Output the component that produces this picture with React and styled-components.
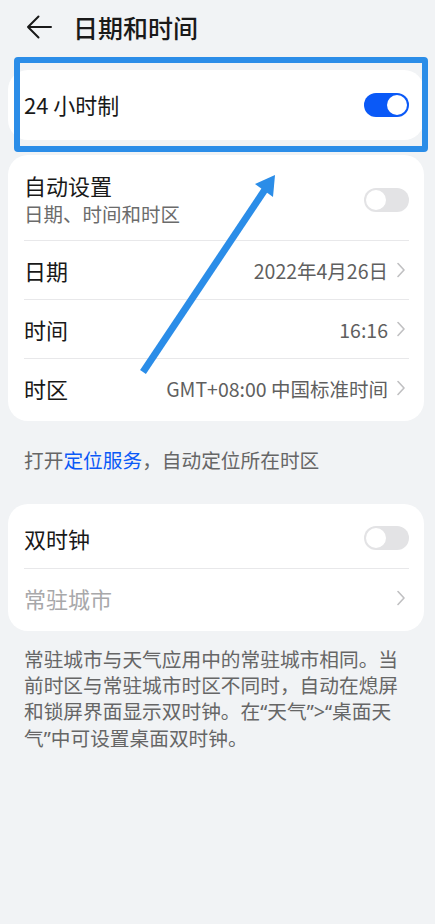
import React from 'react';
import styled, { createGlobalStyle } from 'styled-components';

const GlobalStyle = createGlobalStyle`
  html, body {
    margin: 0;
    padding: 0;
    background: #f1f3f5;
  }
  body {
    font-family: "Noto Sans CJK SC", "Noto Sans", sans-serif;
    color: #191919;
  }
`;

const Page = styled.div`
  position: relative;
  width: 435px;
  min-height: 924px;
  background: #f1f3f5;
  padding: 0 11px 0 8px;
  box-sizing: border-box;
`;

const Header = styled.header`
  display: flex;
  align-items: center;
  height: 54px;
  gap: 20px;
  padding-left: 17px;
`;

const BackButton = styled.button`
  display: flex;
  align-items: center;
  justify-content: center;
  width: 28px;
  height: 28px;
  padding: 0;
  background: none;
  border: none;
`;

const Title = styled.h1`
  margin: 0;
  font-size: 25px;
  font-weight: 500;
  color: #191919;
`;

const HighlightWrap = styled.div`
  position: relative;
  margin-top: 16px;
`;

const Highlight = styled.div`
  position: absolute;
  top: -13px;
  left: 6px;
  right: -4px;
  bottom: -12px;
  border: 6px solid #2b8de8;
  border-radius: 4px;
  pointer-events: none;
`;

const Card = styled.section`
  background: #fff;
  border-radius: 20px;
  padding: ${({ $pad }) => $pad || '4px 0'};
  margin-top: ${({ $top }) => $top || 0}px;
`;

const Row = styled.div`
  display: flex;
  align-items: center;
  justify-content: space-between;
  min-height: ${({ $h }) => $h || 59}px;
  margin: 0 15px 0 16px;
  box-sizing: border-box;
  border-top: ${({ $divider }) => ($divider ? '1px solid #e8e8ea' : 'none')};
`;

const TextCol = styled.div`
  display: flex;
  flex-direction: column;
`;

const Label = styled.span`
  font-size: 22px;
  line-height: 29px;
  color: ${({ $muted }) => ($muted ? '#a8a8aa' : '#191919')};
`;

const Sub = styled.span`
  font-size: 19.5px;
  line-height: 28px;
  color: #6b6b6b;
`;

const Value = styled.span`
  display: flex;
  align-items: center;
  gap: 9px;
  font-size: 19.5px;
  color: #5f5f5f;
`;

const Switch = styled.span`
  position: relative;
  display: inline-block;
  width: 45px;
  height: 24px;
  border-radius: 12px;
  background: ${({ $on }) => ($on ? '#0a59f7' : '#e3e3e5')};
  flex-shrink: 0;
  &::after {
    content: '';
    position: absolute;
    top: 2px;
    left: ${({ $on }) => ($on ? '23px' : '2px')};
    width: 20px;
    height: 20px;
    border-radius: 50%;
    background: #fff;
  }
`;

const Note = styled.p`
  margin: ${({ $m }) => $m};
  padding: 0 20px 0 16px;
  font-size: 19.7px;
  line-height: 26px;
  color: #666;
`;

const Quote = styled.span`
  font-family: "Noto Sans", sans-serif;
`;

const Link = styled.span`
  color: #0a59f7;
`;

const ChevronSvg = styled.svg`
  display: block;
  margin-right: 4px;
`;

const Annotation = styled.svg`
  position: absolute;
  left: 0;
  top: 0;
  pointer-events: none;
`;

const Chevron = () => (
  <ChevronSvg width="8" height="16" viewBox="0 0 8 16">
    <path d="M1 1.5 L7 8 L1 14.5" fill="none" stroke="#c0c0c2" strokeWidth="1.6" strokeLinecap="round" strokeLinejoin="round" />
  </ChevronSvg>
);

const BackArrow = () => (
  <svg width="28" height="24" viewBox="0 0 28 24">
    <path d="M3 12 H26 M13.5 1.5 L3 12 L13.5 22.5" fill="none" stroke="#191919" strokeWidth="2" strokeLinecap="round" strokeLinejoin="round" />
  </svg>
);

export default function App() {
  return (
    <>
      <GlobalStyle />
      <Page>
        <Header>
          <BackButton aria-label="返回">
            <BackArrow />
          </BackButton>
          <Title>日期和时间</Title>
        </Header>

        <HighlightWrap>
          <Card $pad="5px 0 6px">
            <Row>
              <Label>24 小时制</Label>
              <Switch $on />
            </Row>
          </Card>
          <Highlight />
        </HighlightWrap>

        <Card $top={15}>
          <Row $h={81}>
            <TextCol>
              <Label>自动设置</Label>
              <Sub>日期、时间和时区</Sub>
            </TextCol>
            <Switch />
          </Row>
          <Row $divider>
            <Label>日期</Label>
            <Value>2022年4月26日<Chevron /></Value>
          </Row>
          <Row $divider>
            <Label>时间</Label>
            <Value>16:16<Chevron /></Value>
          </Row>
          <Row $divider>
            <Label>时区</Label>
            <Value>GMT+08:00 中国标准时间<Chevron /></Value>
          </Row>
        </Card>

        <Note $m="26px 0 31px">
          打开<Link>定位服务</Link>，自动定位所在时区
        </Note>

        <Card>
          <Row $h={60}>
            <Label>双时钟</Label>
            <Switch />
          </Row>
          <Row $divider>
            <Label $muted>常驻城市</Label>
            <Chevron />
          </Row>
        </Card>

        <Note $m="15px 0 0">
          常驻城市与天气应用中的常驻城市相同。当前时区与常驻城市时区不同时，自动在熄屏和锁屏界面显示双时钟。在<Quote>“</Quote>天气<Quote>”&gt;“</Quote>桌面天气<Quote>”</Quote>中可设置桌面双时钟。
        </Note>

        <Annotation width="435" height="924" viewBox="0 0 435 924">
          <line x1="143" y1="372" x2="266" y2="188" stroke="#2b8de8" strokeWidth="7" />
          <polygon points="275,175 255,184 273,197" fill="#2b8de8" />
        </Annotation>
      </Page>
    </>
  );
}
